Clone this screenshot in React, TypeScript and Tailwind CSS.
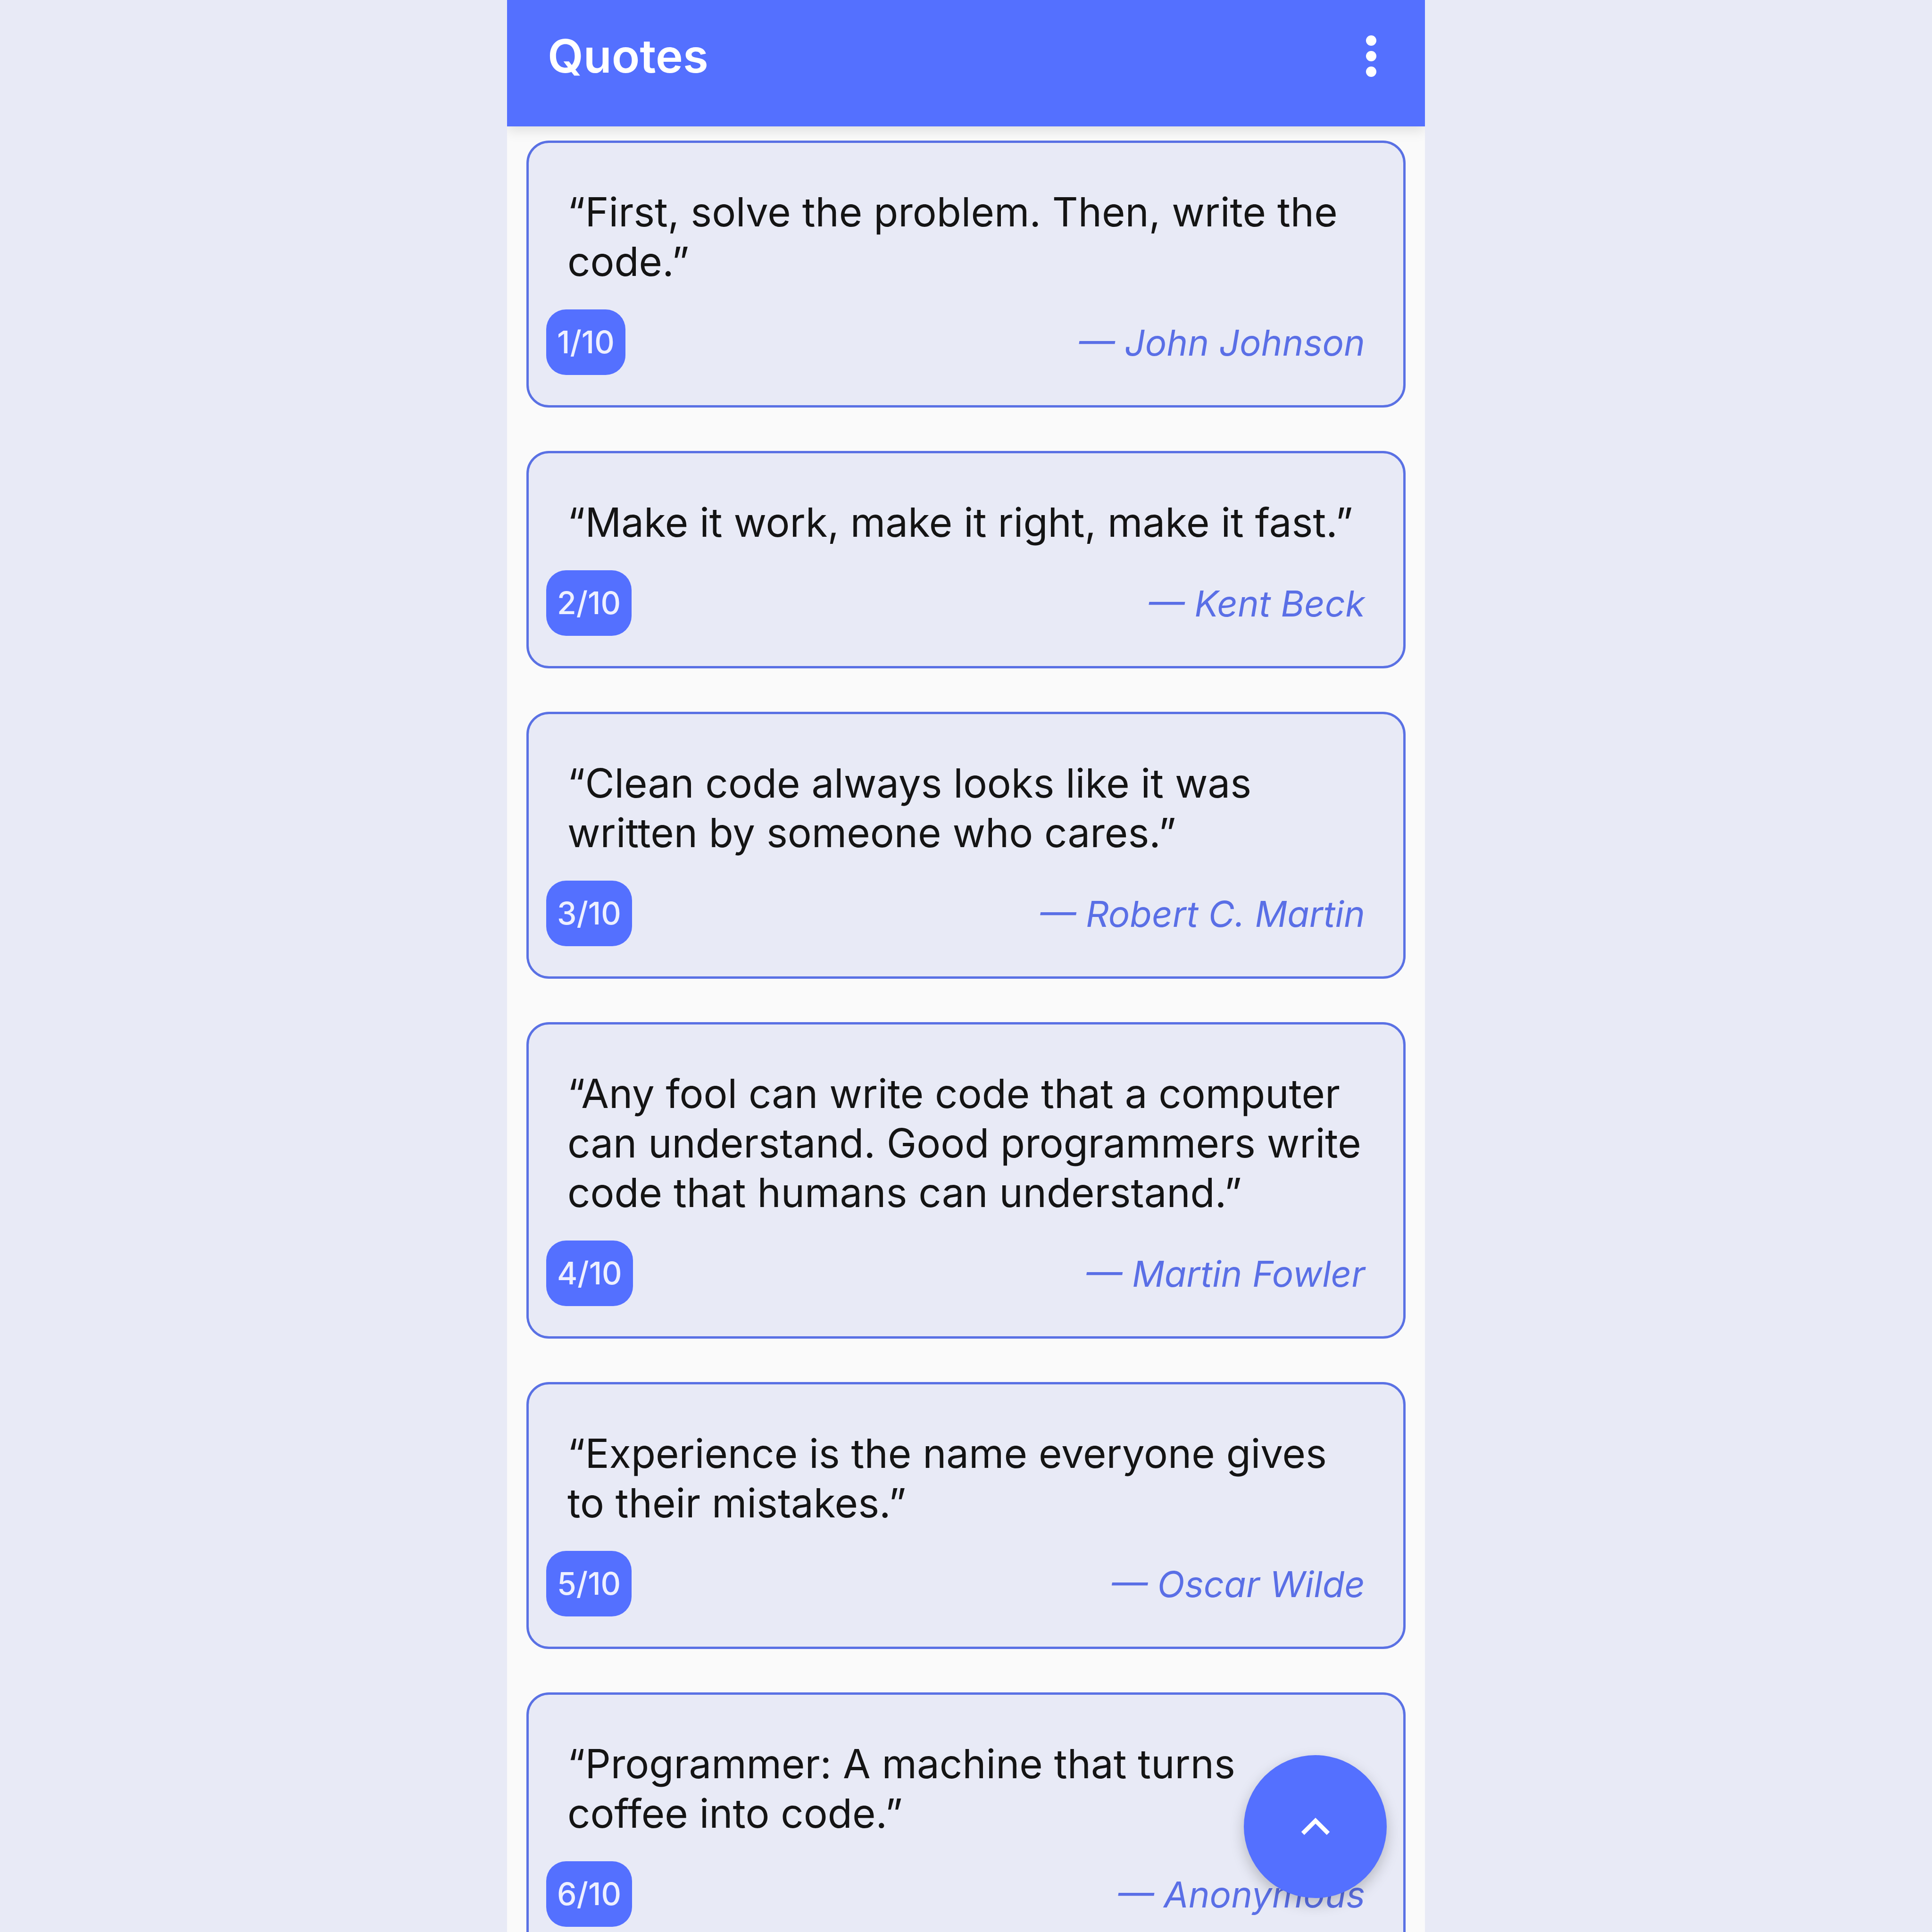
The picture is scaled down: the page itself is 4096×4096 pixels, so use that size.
import React from "react";

type Quote = { text: string; author: string };

const quotes: Quote[] = [
  { text: "First, solve the problem. Then, write the code.", author: "John Johnson" },
  { text: "Make it work, make it right, make it fast.", author: "Kent Beck" },
  { text: "Clean code always looks like it was written by someone who cares.", author: "Robert C. Martin" },
  {
    text: "Any fool can write code that a computer can understand. Good programmers write code that humans can understand.",
    author: "Martin Fowler",
  },
  { text: "Experience is the name everyone gives to their mistakes.", author: "Oscar Wilde" },
  { text: "Programmer: A machine that turns coffee into code.", author: "Anonymous" },
  { text: "Simplicity is the soul of efficiency.", author: "Austin Freeman" },
  { text: "Code is like humor. When you have to explain it, it’s bad.", author: "Cory House" },
  { text: "Fix the cause, not the symptom.", author: "Steve Maguire" },
  { text: "Talk is cheap. Show me the code.", author: "Linus Torvalds" },
];

const QuoteCard: React.FC<{ quote: Quote; index: number; total: number }> = ({ quote, index, total }) => {
  return (
    <div className="shrink-0 rounded-[48px] border-[5px] border-[#5a71e4] bg-[#e8eaf6] px-[37px] pt-[94px] pb-[64px]">
      <p className="pl-[45px] pr-[47px] text-[85px] leading-[105px] text-[#141414]">
        “{quote.text}”
      </p>
      <div className="mt-[49px] flex items-center justify-between">
        <span className="flex h-[139px] items-center rounded-[42px] bg-[#5470ff] px-[23px] text-[66px] font-medium text-[#eef0ff]">
          {index}/{total}
        </span>
        <span className="pr-[44px] text-[76px] italic text-[#5a6fe6]">— {quote.author}</span>
      </div>
    </div>
  );
};

export default function App() {
  return (
    <div
      className="flex h-[4096px] w-[4096px] justify-center overflow-hidden bg-[#e8eaf6]"
      style={{ fontFamily: "Inter, 'Noto Sans', sans-serif" }}
    >
      <div className="relative flex h-full w-[1946px] flex-col overflow-hidden bg-[#fafafa]">
        <header className="relative z-10 flex h-[268px] shrink-0 items-center justify-between bg-[#5470ff] pb-[30px] pl-[86px] pr-[103px] shadow-[0_10px_24px_rgba(0,0,0,0.10)]">
          <h1 className="text-[98px] font-semibold leading-none text-white">Quotes</h1>
          <svg width="22" height="88" viewBox="0 0 22 88" fill="white">
            <circle cx="11" cy="11" r="11" />
            <circle cx="11" cy="44" r="11" />
            <circle cx="11" cy="77" r="11" />
          </svg>
        </header>

        <div className="flex flex-col gap-[92px] px-[41px] pt-[30px]">
          {quotes.map((q, i) => (
            <QuoteCard key={i} quote={q} index={i + 1} total={quotes.length} />
          ))}
        </div>

        <button className="absolute bottom-[72px] right-[81px] z-20 flex h-[303px] w-[303px] items-center justify-center rounded-full bg-[#5470ff] shadow-[0_12px_30px_rgba(0,0,0,0.22)]">
          <svg width="64" height="40" viewBox="0 0 64 40" fill="none" stroke="white" strokeWidth="9">
            <polyline points="5,34 32,7 59,34" />
          </svg>
        </button>
      </div>
    </div>
  );
}
